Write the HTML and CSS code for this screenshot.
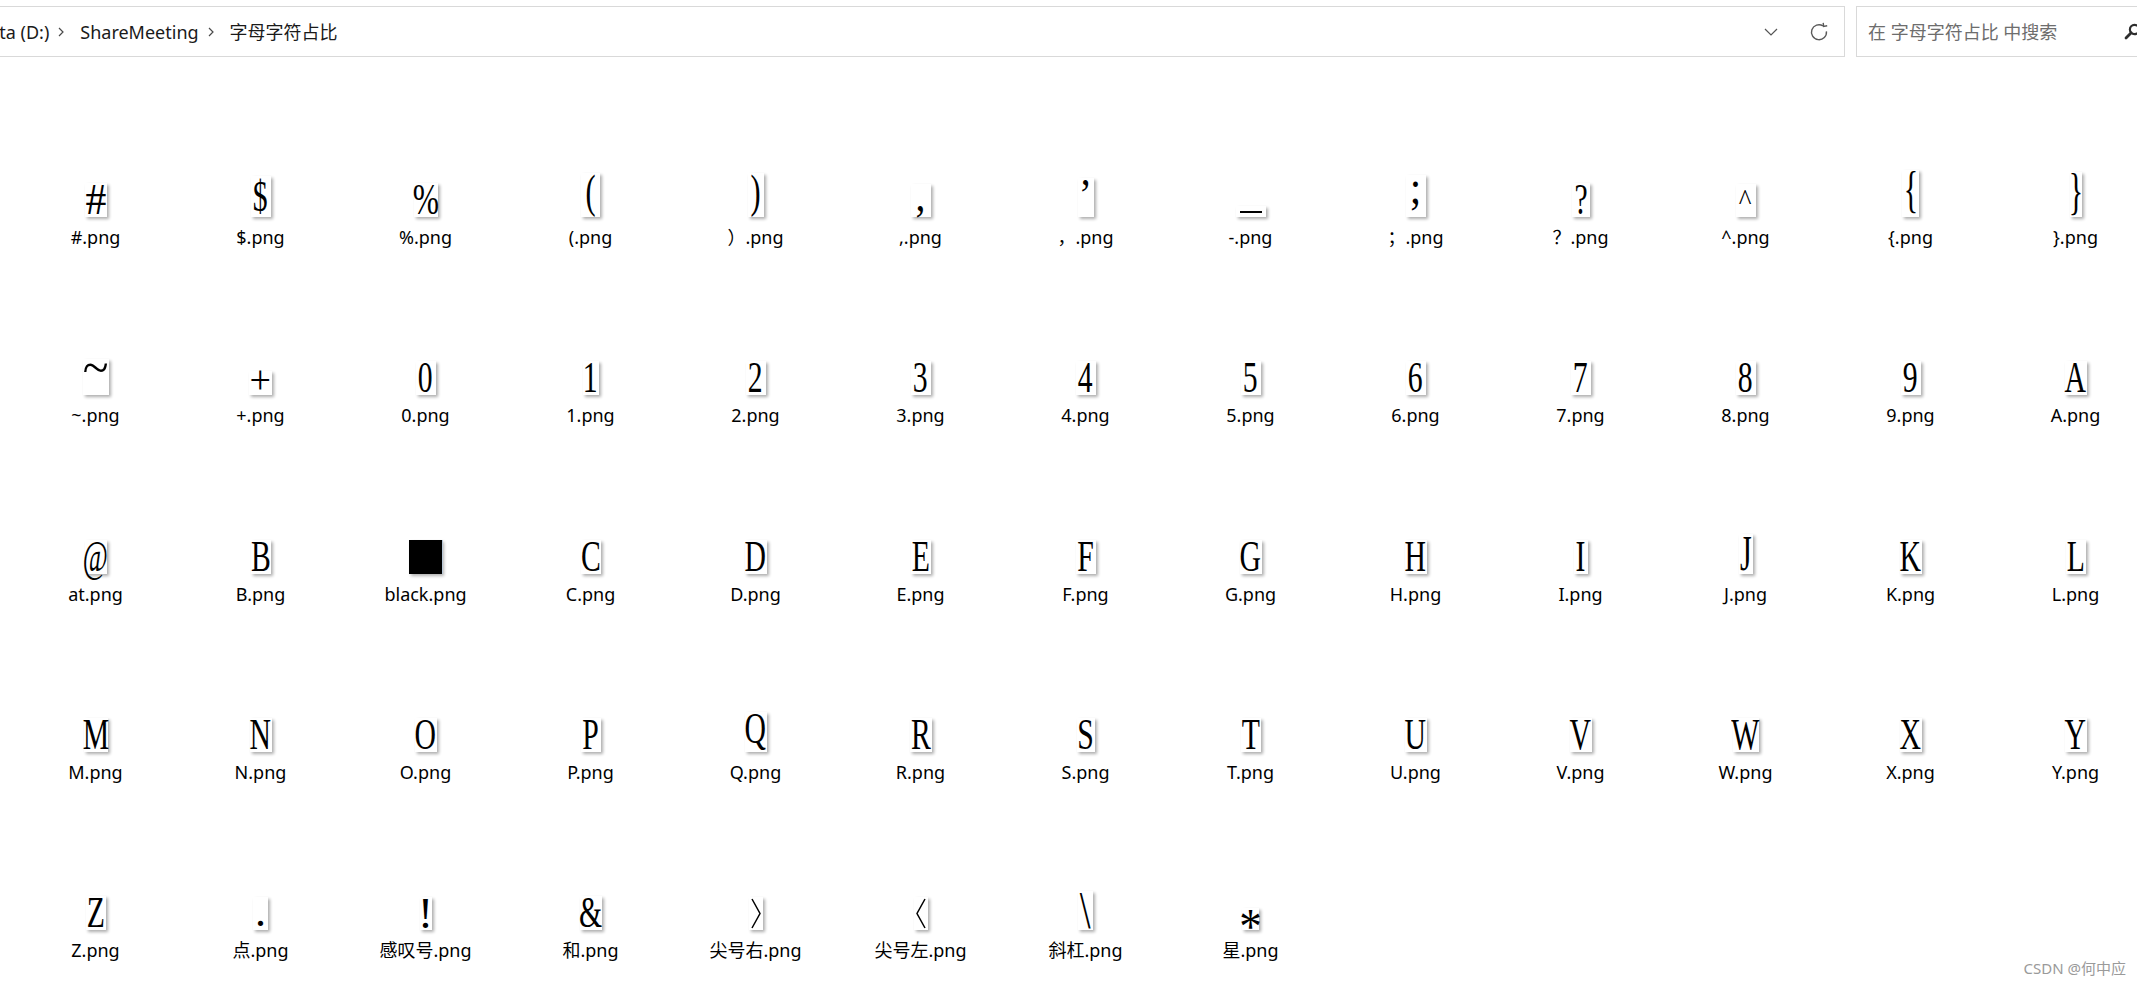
FILE: index.html
```html
<!DOCTYPE html>
<html lang="zh-CN">
<head>
<meta charset="utf-8">
<title>字母字符占比</title>
<link rel="stylesheet" href="styles.css">
</head>
<body>
<div class="header">
  <div class="addr">
    <div class="crumbs">
      <span class="crumb first">Data (D:)</span>
      <svg class="sep" width="6" height="10" viewBox="0 0 6 10"><polyline points="1,1 5,5 1,9" fill="none" stroke="#4a4a4a" stroke-width="1.2"/></svg>
      <span class="crumb">ShareMeeting</span>
      <svg class="sep" width="6" height="10" viewBox="0 0 6 10"><polyline points="1,1 5,5 1,9" fill="none" stroke="#4a4a4a" stroke-width="1.2"/></svg>
      <span class="crumb">字母字符占比</span>
    </div>
    <div class="addr-tools">
      <svg class="dd" width="14" height="8" viewBox="0 0 14 8"><polyline points="1,1 7,7 13,1" fill="none" stroke="#555" stroke-width="1.2"/></svg>
      <svg class="refresh" width="20" height="20" viewBox="0 0 20 20"><path d="M17.4 9.3 A7.5 7.5 0 1 1 14 3.9" fill="none" stroke="#5a5a5a" stroke-width="1.4"/><polyline points="14.2,0.8 14.6,4.4 18.2,3.8" fill="none" stroke="#5a5a5a" stroke-width="1.4"/></svg>
    </div>
  </div>
  <div class="search">
    <span class="ph">在 字母字符占比 中搜索</span>
    <svg class="mag" width="17" height="17" viewBox="0 0 17 17"><circle cx="10.5" cy="6.5" r="4.6" fill="none" stroke="#2e2e2e" stroke-width="2.2"/><line x1="7.2" y1="9.8" x2="2" y2="15" stroke="#2e2e2e" stroke-width="2.8" stroke-linecap="round"/></svg>
  </div>
</div>

<div class="grid">
  <!-- row 1 -->
  <div class="item"><div class="ic"><div class="thumb w22 h34"><span class="g ghash">#</span></div></div><div class="lbl">#.png</div></div>
  <div class="item"><div class="ic"><div class="thumb w20 h41"><span class="g gd">$</span></div></div><div class="lbl">$.png</div></div>
  <div class="item"><div class="ic"><div class="thumb w24 h34"><span class="g gpct">%</span></div></div><div class="lbl">%.png</div></div>
  <div class="item"><div class="ic"><div class="thumb w19 h44"><span class="g gp">(</span></div></div><div class="lbl">(.png</div></div>
  <div class="item"><div class="ic"><div class="thumb w16 h44"><span class="g gp">)</span></div></div><div class="lbl">）.png</div></div>
  <div class="item"><div class="ic"><div class="thumb w20 h33"><span class="g gc">,</span></div></div><div class="lbl">,.png</div></div>
  <div class="item"><div class="ic"><div class="thumb w16 h39"><span class="g gq">’</span></div></div><div class="lbl">，.png</div></div>
  <div class="item"><div class="ic"><div class="thumb w30 h11 mid"><span class="bar"></span></div></div><div class="lbl">-.png</div></div>
  <div class="item"><div class="ic"><div class="thumb w20 h42"><span class="g gs">;</span></div></div><div class="lbl">；.png</div></div>
  <div class="item"><div class="ic"><div class="thumb w18 h34"><span class="g">?</span></div></div><div class="lbl">？.png</div></div>
  <div class="item"><div class="ic"><div class="thumb w20 h33"><span class="g gk">^</span></div></div><div class="lbl">^.png</div></div>
  <div class="item"><div class="ic"><div class="thumb w17 h47"><span class="g gb">{</span></div></div><div class="lbl">{.png</div></div>
  <div class="item"><div class="ic"><div class="thumb w12 h45"><span class="g gb">}</span></div></div><div class="lbl">}.png</div></div>
  <!-- row 2 -->
  <div class="item"><div class="ic"><div class="thumb w26 h36"><span class="g gt">~</span></div></div><div class="lbl">~.png</div></div>
  <div class="item"><div class="ic"><div class="thumb w23 h24"><span class="g gplus">+</span></div></div><div class="lbl">+.png</div></div>
  <div class="item"><div class="ic"><div class="thumb w20 h34"><span class="g">0</span></div></div><div class="lbl">0.png</div></div>
  <div class="item"><div class="ic"><div class="thumb w16 h34"><span class="g">1</span></div></div><div class="lbl">1.png</div></div>
  <div class="item"><div class="ic"><div class="thumb w20 h34"><span class="g">2</span></div></div><div class="lbl">2.png</div></div>
  <div class="item"><div class="ic"><div class="thumb w20 h34"><span class="g">3</span></div></div><div class="lbl">3.png</div></div>
  <div class="item"><div class="ic"><div class="thumb w20 h34"><span class="g">4</span></div></div><div class="lbl">4.png</div></div>
  <div class="item"><div class="ic"><div class="thumb w20 h34"><span class="g">5</span></div></div><div class="lbl">5.png</div></div>
  <div class="item"><div class="ic"><div class="thumb w20 h34"><span class="g">6</span></div></div><div class="lbl">6.png</div></div>
  <div class="item"><div class="ic"><div class="thumb w20 h34"><span class="g">7</span></div></div><div class="lbl">7.png</div></div>
  <div class="item"><div class="ic"><div class="thumb w20 h34"><span class="g">8</span></div></div><div class="lbl">8.png</div></div>
  <div class="item"><div class="ic"><div class="thumb w20 h34"><span class="g">9</span></div></div><div class="lbl">9.png</div></div>
  <div class="item"><div class="ic"><div class="thumb w22 h34"><span class="g">A</span></div></div><div class="lbl">A.png</div></div>
  <!-- row 3 -->
  <div class="item"><div class="ic"><div class="thumb w22 h34"><span class="g gat">@</span></div></div><div class="lbl">at.png</div></div>
  <div class="item"><div class="ic"><div class="thumb w20 h34"><span class="g">B</span></div></div><div class="lbl">B.png</div></div>
  <div class="item"><div class="ic"><div class="thumb black"></div></div><div class="lbl">black.png</div></div>
  <div class="item"><div class="ic"><div class="thumb w20 h34"><span class="g">C</span></div></div><div class="lbl">C.png</div></div>
  <div class="item"><div class="ic"><div class="thumb w22 h34"><span class="g">D</span></div></div><div class="lbl">D.png</div></div>
  <div class="item"><div class="ic"><div class="thumb w20 h34"><span class="g">E</span></div></div><div class="lbl">E.png</div></div>
  <div class="item"><div class="ic"><div class="thumb w20 h34"><span class="g">F</span></div></div><div class="lbl">F.png</div></div>
  <div class="item"><div class="ic"><div class="thumb w22 h34"><span class="g">G</span></div></div><div class="lbl">G.png</div></div>
  <div class="item"><div class="ic"><div class="thumb w22 h34"><span class="g">H</span></div></div><div class="lbl">H.png</div></div>
  <div class="item"><div class="ic"><div class="thumb w14 h34"><span class="g">I</span></div></div><div class="lbl">I.png</div></div>
  <div class="item"><div class="ic"><div class="thumb w14 h40"><span class="g gj">J</span></div></div><div class="lbl">J.png</div></div>
  <div class="item"><div class="ic"><div class="thumb w22 h34"><span class="g">K</span></div></div><div class="lbl">K.png</div></div>
  <div class="item"><div class="ic"><div class="thumb w20 h34"><span class="g">L</span></div></div><div class="lbl">L.png</div></div>
  <!-- row 4 -->
  <div class="item"><div class="ic"><div class="thumb w24 h34"><span class="g">M</span></div></div><div class="lbl">M.png</div></div>
  <div class="item"><div class="ic"><div class="thumb w22 h34"><span class="g">N</span></div></div><div class="lbl">N.png</div></div>
  <div class="item"><div class="ic"><div class="thumb w22 h34"><span class="g">O</span></div></div><div class="lbl">O.png</div></div>
  <div class="item"><div class="ic"><div class="thumb w20 h34"><span class="g">P</span></div></div><div class="lbl">P.png</div></div>
  <div class="item"><div class="ic"><div class="thumb w22 h40"><span class="g">Q</span></div></div><div class="lbl">Q.png</div></div>
  <div class="item"><div class="ic"><div class="thumb w22 h34"><span class="g">R</span></div></div><div class="lbl">R.png</div></div>
  <div class="item"><div class="ic"><div class="thumb w18 h34"><span class="g">S</span></div></div><div class="lbl">S.png</div></div>
  <div class="item"><div class="ic"><div class="thumb w20 h34"><span class="g">T</span></div></div><div class="lbl">T.png</div></div>
  <div class="item"><div class="ic"><div class="thumb w22 h34"><span class="g">U</span></div></div><div class="lbl">U.png</div></div>
  <div class="item"><div class="ic"><div class="thumb w22 h34"><span class="g">V</span></div></div><div class="lbl">V.png</div></div>
  <div class="item"><div class="ic"><div class="thumb w26 h34"><span class="g">W</span></div></div><div class="lbl">W.png</div></div>
  <div class="item"><div class="ic"><div class="thumb w22 h34"><span class="g">X</span></div></div><div class="lbl">X.png</div></div>
  <div class="item"><div class="ic"><div class="thumb w22 h34"><span class="g">Y</span></div></div><div class="lbl">Y.png</div></div>
  <!-- row 5 -->
  <div class="item"><div class="ic"><div class="thumb w20 h34"><span class="g">Z</span></div></div><div class="lbl">Z.png</div></div>
  <div class="item"><div class="ic"><div class="thumb w15 h33"><span class="g gdot">.</span></div></div><div class="lbl">点.png</div></div>
  <div class="item"><div class="ic"><div class="thumb w12 h33"><span class="g gex">!</span></div></div><div class="lbl">感叹号.png</div></div>
  <div class="item"><div class="ic"><div class="thumb w22 h34"><span class="g">&amp;</span></div></div><div class="lbl">和.png</div></div>
  <div class="item"><div class="ic"><div class="thumb w14 h33"><svg width="14" height="33" viewBox="0 0 14 33"><polyline points="3,2 11,16.5 3,31" fill="none" stroke="#000" stroke-width="1.5"/></svg></div></div><div class="lbl">尖号右.png</div></div>
  <div class="item"><div class="ic"><div class="thumb w14 h33"><svg width="14" height="33" viewBox="0 0 14 33"><polyline points="11,2 3,16.5 11,31" fill="none" stroke="#000" stroke-width="1.5"/></svg></div></div><div class="lbl">尖号左.png</div></div>
  <div class="item"><div class="ic"><div class="thumb w15 h39"><span class="g gbs">\</span></div></div><div class="lbl">斜杠.png</div></div>
  <div class="item"><div class="ic"><div class="thumb w17 h22"><span class="g gstar">*</span></div></div><div class="lbl">星.png</div></div>
</div>

<div class="wm">CSDN @何中应</div>
</body>
</html>
```

FILE: styles.css
```css
html, body {
  margin: 0;
  padding: 0;
  background: #ffffff;
}
body {
  width: 2137px;
  height: 984px;
  overflow: hidden;
  position: relative;
  font-family: "Noto Sans", "Noto Sans CJK SC", sans-serif;
  color: #000;
}

/* ---------- header ---------- */
.header {
  display: flex;
  align-items: stretch;
  margin-top: 6px;
  height: 51px;
}
.addr {
  box-sizing: border-box;
  width: 1847px;
  margin-left: -2px;
  border: 1px solid #d9d9d9;
  display: flex;
  align-items: center;
  justify-content: space-between;
  overflow: hidden;
  flex: none;
}
.crumbs {
  display: flex;
  align-items: center;
  font-size: 18px;
  line-height: 24px;
  color: #1a1a1a;
  white-space: nowrap;
}
.crumb.first {
  margin-left: -23px;
}
.sep {
  margin: 0 16px 0 9px;
  flex: none;
}
.addr-tools {
  display: flex;
  align-items: center;
  gap: 31px;
  padding-right: 15px;
}
.dd { margin-top: 1px; }
.search {
  box-sizing: border-box;
  width: 300px;
  margin-left: 11px;
  border: 1px solid #d9d9d9;
  display: flex;
  align-items: center;
  justify-content: space-between;
  padding: 0 14px 0 11px;
  flex: none;
}
.ph {
  font-size: 18px;
  line-height: 24px;
  color: #6d6d6d;
  white-space: nowrap;
}

/* ---------- grid ---------- */
.grid {
  display: grid;
  grid-template-columns: repeat(13, 165px);
  grid-auto-rows: 178.25px;
  padding-left: 13px;
  margin-top: 96px;
}
.item {
  display: flex;
  flex-direction: column;
  align-items: center;
}
.ic {
  width: 100%;
  height: 64px;
  display: flex;
  align-items: flex-end;
  justify-content: center;
}
.lbl {
  margin-top: 8px;
  font-size: 18px;
  line-height: 24px;
  color: #000;
  white-space: nowrap;
}

.thumb {
  background: #fff;
  box-shadow: 2px 2px 3px rgba(0, 0, 0, 0.32);
  display: flex;
  justify-content: center;
  align-items: flex-start;
  flex: none;
}
.thumb.mid { align-items: center; }
.thumb.black {
  width: 33px;
  height: 34px;
  background: #000;
  box-shadow: 1px 0 0 #b8c8d8, 2px 2px 3px rgba(0, 0, 0, 0.3);
}

.w12 { width: 12px; }
.w14 { width: 14px; }
.w15 { width: 15px; }
.w16 { width: 16px; }
.w17 { width: 17px; }
.w18 { width: 18px; }
.w19 { width: 19px; }
.w20 { width: 20px; }
.w22 { width: 22px; }
.w23 { width: 23px; }
.w24 { width: 24px; }
.w26 { width: 26px; }
.w30 { width: 30px; }
.h11 { height: 11px; }
.h22 { height: 22px; }
.h24 { height: 24px; }
.h33 { height: 33px; }
.h34 { height: 34px; }
.h36 { height: 36px; }
.h38 { height: 38px; }
.h39 { height: 39px; }
.h40 { height: 40px; }
.h41 { height: 41px; }
.h42 { height: 42px; }
.h44 { height: 44px; }
.h45 { height: 45px; }
.h47 { height: 47px; }

.g {
  display: block;
  flex: none;
  font-family: "Liberation Serif", "DejaVu Serif", serif;
  font-size: 45px;
  line-height: 33px;
  color: #000;
  white-space: nowrap;
  transform: scaleX(0.66);
}
.ghash { transform: scaleX(0.95); font-size: 44px; }
.gpct { transform: scaleX(0.7); }
.gd { font-size: 45px; line-height: 40px; }
.gp { font-size: 46px; line-height: 37px; }
.gb { font-size: 50px; line-height: 39px; transform: scaleX(0.6); }
.gc { font-size: 44px; line-height: 26px; transform: scaleX(0.9); }
.gq { font-size: 44px; line-height: 34px; transform: scaleX(0.9); }
.gs { font-size: 46px; line-height: 25px; transform: scaleX(0.9); }
.gk { font-size: 30px; line-height: 10px; margin-top: 11px; transform: scaleX(0.9); }
.gt { font-size: 50px; line-height: 16px; transform: scaleX(0.95); }
.gplus { font-size: 40px; line-height: 17px; transform: scaleX(0.95); }
.gat { font-size: 44px; line-height: 33px; transform: scaleX(0.62); }
.gj { font-size: 50px; line-height: 38px; transform: scaleX(0.6); }
.gex { transform: none; }
.gdot { font-size: 44px; line-height: 30px; transform: none; }
.gbs { font-size: 52px; line-height: 39px; transform: scaleX(0.75); }
.gstar { font-size: 50px; line-height: 10px; margin-top: 13px; transform: scaleX(0.9); }

.bar {
  display: block;
  width: 22px;
  height: 2px;
  background: #000;
}

/* ---------- watermark ---------- */
.wm {
  position: absolute;
  right: 11px;
  bottom: 6px;
  font-size: 15px;
  line-height: 20px;
  color: #9a9a9a;
  white-space: nowrap;
}
```
